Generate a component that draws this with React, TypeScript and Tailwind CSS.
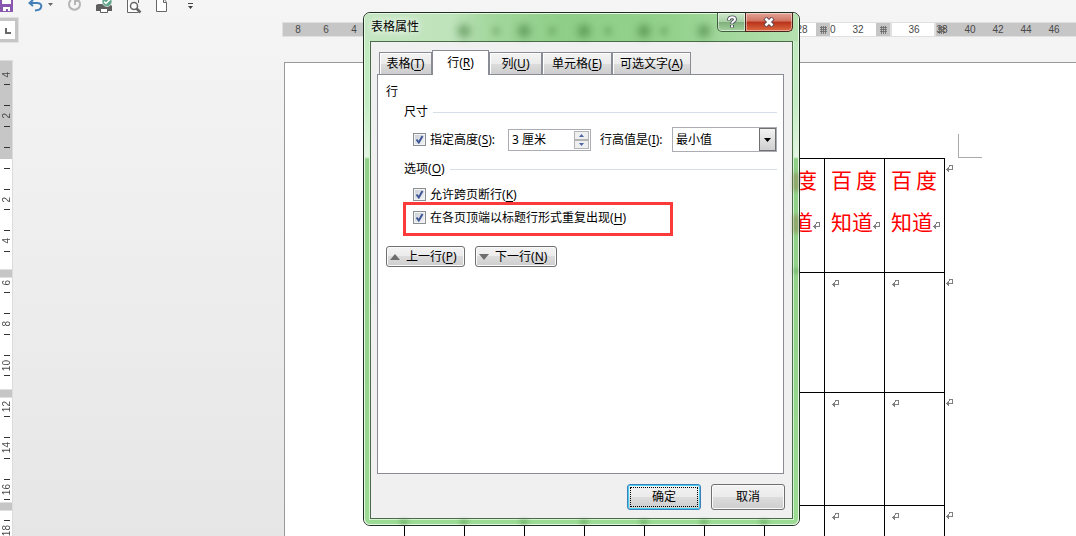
import React, { useState } from 'react'
import clsx from 'clsx'

// centimetre cells, two characters each; blank ones sit under the dialog
const H_LABELS = ['8', '6', '4', ...Array(15).fill(''), '28', '30', '32', '', '36', '38', '40', '42', '44', '46']

const V_CELLS = [
  { label: '2', tall: true },
  { label: '', tall: true },
  { label: '2', tall: false },
  { label: '4', tall: true },
  { label: '6', tall: false },
  { label: '8', tall: true },
  { label: '10', tall: false },
  { label: '12', tall: false },
  { label: '14', tall: true },
  { label: '16', tall: false },
  { label: '18', tall: true },
]

const COLUMNS = [0, 1, 2, 3, 4, 5, 6, 7, 8]
const FIRST_TEXT_COLUMN = 6
const ROW_HEIGHTS = ['h-[120px]', 'h-[113px]', 'h-[120px]']

const TABS = [
  { id: 'table', text: '表格', hotkey: 'T', width: 'w-[53px]' },
  { id: 'row', text: '行', hotkey: 'R', width: 'w-[57px]' },
  { id: 'column', text: '列', hotkey: 'U', width: 'w-[53px]' },
  { id: 'cell', text: '单元格', hotkey: 'E', width: 'w-[70px]' },
  { id: 'alt', text: '可选文字', hotkey: 'A', width: 'w-[79px]' },
]

const Hot = ({ text, hotkey, colon }: { text: string; hotkey: string; colon?: boolean }) => (
  <span className="whitespace-nowrap">
    {text}(<span className="underline underline-offset-2">{hotkey}</span>){colon && ':'}
  </span>
)

const ReturnMark = ({ className }: { className?: string }) => (
  <svg width="8" height="8" viewBox="0 0 8 8" fill="none" stroke="#808080" shapeRendering="crispEdges" className={clsx('shrink-0', className)}>
    <path d="M3 .5h4M6.500 1v4M3.500 0v2M0 4.500h7M1.500 3v3M2.500 2v5" />
  </svg>
)

const Toolbar = () => (
  <div className="flex h-[18px] items-start">
    <button type="button" aria-label="保存" className="w-7">
      <svg width="14" height="13" viewBox="0 0 14 13">
        <path d="M0 0h13v12H0z" fill="#8957ad" />
        <path d="M2 0h9v4H2zM3 7h7v4H8V9H6v2H3z" fill="#fff" />
      </svg>
    </button>
    <button type="button" aria-label="撤消" className="w-[19px]">
      <svg width="15" height="13" viewBox="0 0 15 13" fill="none" stroke="#4480b8" strokeWidth="2">
        <path d="M1 3h8c6 0 6 7-2 7.500M5 0L1.500 3 5 6" />
      </svg>
    </button>
    <button type="button" aria-label="撤消列表" className="w-5">
      <svg width="8" height="8" viewBox="0 0 8 8">
        <path d="M1 3h5L3.500 6z" fill="#666" />
      </svg>
    </button>
    <button type="button" aria-label="重复" className="w-7">
      <svg width="15" height="13" viewBox="0 0 15 13" fill="none" stroke="#b5b5b5" strokeWidth="2">
        <path d="M4 0a5.500 5.500 0 1 0 7 0M8 5V1h3" />
      </svg>
    </button>
    <button type="button" aria-label="快速打印" className="w-8">
      <svg width="18" height="14" viewBox="0 0 18 14">
        <path d="M1 5l2-1h12l2 2v5H1z" fill="#5f5f5f" />
        <path d="M4 0v4h5V0z" fill="#fff" />
        <path d="M5.500 8.500h7v4h-7z" fill="#fff" stroke="#5f5f5f" />
        <circle cx="12" cy="1.500" r="5" fill="#5fa58c" stroke="#f4f4f4" strokeWidth=".7" />
        <path d="M9 1.500l2 2 4-4" fill="none" stroke="#fff" strokeWidth="1.500" />
      </svg>
    </button>
    <button type="button" aria-label="打印预览" className="w-7">
      <svg width="16" height="14" viewBox="0 0 16 14" fill="none" stroke="#666">
        <path d="M.5 0v12.500h11M11.500 0v3" fill="#fff" />
        <circle cx="7" cy="6" r="3.500" fill="#fff" strokeWidth="1.500" />
        <path d="M9.500 8.500l4 4" strokeWidth="2.500" />
      </svg>
    </button>
    <button type="button" aria-label="新建" className="w-8 pl-px">
      <svg width="12" height="13" viewBox="0 0 12 13" fill="#fff" stroke="#666">
        <path d="M.5-1v12.500h10V2.500L8-1" />
        <path d="M7.500 0v2.500h3" />
      </svg>
    </button>
    <button type="button" aria-label="自定义快速访问工具栏">
      <svg width="7" height="10" viewBox="0 0 7 10">
        <path d="M1 3h5v1H1zM1 6h5L3.500 9z" fill="#444" />
      </svg>
    </button>
  </div>
)

const GridHandle = ({ className }: { className: string }) => (
  <span className={clsx('absolute inset-y-0 flex bg-[#c6c6c6]', className)}>
    <svg width="14" height="13" viewBox="0 0 14 13">
      <path d="M5.500 3v8M7.500 3v8M9.500 3v8M4 4.500h7M4 6.500h7M4 8.500h7" stroke="#666" strokeWidth=".8" />
    </svg>
  </span>
)

const HorizontalRuler = () => (
  <div className="relative ml-[264px] mt-1 h-[15px] flex-1 overflow-hidden border-y border-l border-[#e0e0e0] bg-[#c6c6c6]">
    <div className="absolute inset-y-0 left-[128px] w-[525px] border-r-2 border-[#e0e0e0] bg-white" />
    <div className="relative flex pl-px text-[10px] leading-[13px] text-[#4a4a4a]">
      {H_LABELS.map((label, i) => (
        <span key={i} className="w-7 shrink-0 text-center">{label}</span>
      ))}
    </div>
    <GridHandle className="left-[533px]" />
    <GridHandle className="left-[593px] border-r-2 border-[#e0e0e0]" />
    <svg width="8" height="8" viewBox="0 0 8 8" className="absolute left-[655px] top-[3px]">
      <path d="M1.500 0v8M3.500 0v8M5.500 0v8M0 1.500h7M0 3.500h7M0 5.500h7" stroke="#666" strokeWidth=".8" />
    </svg>
  </div>
)

const Tick = () => <span className="ml-1 h-px w-1.5 shrink-0 bg-[#333]" />

const VLabel = ({ children }: { children: React.ReactNode }) => (
  <span className="flex flex-1 items-center justify-center">
    <span className="rotate-180 leading-[11px] [writing-mode:vertical-rl]">{children}</span>
  </span>
)

const VerticalRuler = () => (
  <div className="relative w-[13px] shrink-0 overflow-hidden border-r border-t border-[#dcdcdc] bg-white font-['Liberation_Sans',sans-serif] text-[10px] text-[#4a4a4a]">
    <div className="absolute inset-x-0 top-0 h-[98px] bg-[#c6c6c6]" />
    <div className="relative flex flex-col">
      <div className="flex h-[34px] flex-col pb-[10px] pt-1">
        <VLabel>4</VLabel>
        <Tick />
      </div>
      {V_CELLS.map((cell, i) => (
        <div key={i} className={clsx('flex shrink-0 flex-col py-[10px]', cell.tall ? 'h-[42px]' : 'h-[41px]')}>
          <Tick />
          <VLabel>{cell.label}</VLabel>
          <Tick />
        </div>
      ))}
    </div>
    {/* row boundary handles */}
    <div className="absolute inset-x-0 top-[208px] h-[9px] border-y border-[#e0e0e0] bg-[#c6c6c6]" />
    <div className="absolute inset-x-0 top-[328px] h-[9px] border-y border-[#e0e0e0] bg-[#c6c6c6]" />
    <div className="absolute inset-x-0 top-[441px] h-[9px] border-y border-[#e0e0e0] bg-[#c6c6c6]" />
  </div>
)

const DocumentPage = () => (
  <div className="ml-[271px] mt-[2px] flex-1 overflow-hidden border-l border-t border-[#999] bg-white pt-[71px]">
    <div className="ml-[673px] h-6 w-6 border-b border-l border-[#aaa]" />
    <table className="ml-[119px] w-[554px] table-fixed border-collapse">
      <colgroup>
        {COLUMNS.map(c => <col key={c} className="w-[60px]" />)}
        <col className="w-[14px]" />
      </colgroup>
      <tbody className="align-top">
        <tr className="h-[114px]">
          {COLUMNS.map(c => (
            <td key={c} className="border border-black p-0 pl-[6px] text-[21px] leading-[42px] text-[#f00]">
              {c >= FIRST_TEXT_COLUMN && (
                <>
                  <div className="flex w-[46px] justify-between"><span>百</span><span>度</span></div>
                  <div className="flex items-center whitespace-nowrap">知道<ReturnMark className="mt-2" /></div>
                </>
              )}
            </td>
          ))}
          <td className="p-0 pl-px pt-[6px]"><ReturnMark /></td>
        </tr>
        {ROW_HEIGHTS.map((height, r) => (
          <tr key={r} className={height}>
            {COLUMNS.map(c => (
              <td key={c} className="border border-black p-0 pl-[7px] pt-[7px]"><ReturnMark /></td>
            ))}
            <td className="p-0 pl-px pt-[6px]"><ReturnMark /></td>
          </tr>
        ))}
      </tbody>
    </table>
  </div>
)

const Check = ({ checked, onChange, children }: { checked: boolean; onChange: () => void; children: React.ReactNode }) => (
  <label className="flex items-center gap-1">
    <span className="relative flex">
      <input
        type="checkbox"
        checked={checked}
        onChange={onChange}
        className="h-[13px] w-[13px] appearance-none border border-[#8a8f94] bg-gradient-to-br from-[#c9ced6] to-[#f4f4f4] shadow-[inset_0_0_0_1px_#f4f4f4]"
      />
      {checked && (
        <svg width="13" height="13" viewBox="0 0 13 13" fill="none" className="pointer-events-none absolute inset-0">
          <path d="M3.500 6.500l2.300 3L9.500 3" stroke="#3f5797" strokeWidth="2" />
        </svg>
      )}
    </span>
    {children}
  </label>
)

const Legend = ({ children }: { children: React.ReactNode }) => (
  <div className="flex h-5 items-center gap-[5px] pl-[18px]">
    {children}
    <span className="h-px flex-1 bg-[#d5dfe9]" />
  </div>
)

const buttonFace = 'rounded-[3px] border border-[#707070] bg-[linear-gradient(#f3f3f3_0%,#ebebeb_50%,#dcdcdc_50%,#cecece_100%)] shadow-[inset_0_0_0_1px_#fafafa]'

const RowPanel = () => {
  const [options, setOptions] = useState({ height: true, split: true, header: true })
  const [height, setHeight] = useState('3 厘米')
  const toggle = (key: 'height' | 'split' | 'header') => setOptions(prev => ({ ...prev, [key]: !prev[key] }))

  return (
    <div className="mr-px h-[400px] border border-[#898c95] bg-white pl-2 pr-[6px] pt-[7px]">
      <div className="h-5 leading-5">行</div>
      <Legend>尺寸</Legend>
      <div className="mt-[5px] flex h-[25px] items-center pl-[27px]">
        <Check checked={options.height} onChange={() => toggle('height')}>
          <Hot text="指定高度" hotkey="S" colon />
        </Check>
        <div className="ml-auto flex h-[22px] w-[83px] border border-[#abadb3] p-px">
          <input
            aria-label="指定高度"
            value={height}
            onChange={e => setHeight(e.target.value)}
            className="w-0 flex-1 pl-[2px] outline-none"
          />
          <div className="flex w-[15px] flex-col">
            <button type="button" aria-label="增大" className="flex flex-1 items-center justify-center border border-[#b4b4b4] bg-[#efefef]">
              <svg width="5" height="3" viewBox="0 0 5 3"><path d="M0 3h5L2.500 0z" fill="#4c64a5" /></svg>
            </button>
            <button type="button" aria-label="减小" className="flex flex-1 items-center justify-center border border-[#b4b4b4] bg-[#efefef]">
              <svg width="5" height="3" viewBox="0 0 5 3"><path d="M0 0h5L2.500 3z" fill="#4c64a5" /></svg>
            </button>
          </div>
        </div>
        <label htmlFor="rule" className="ml-[9px] w-[72px]">
          <Hot text="行高值是" hotkey="I" colon />
        </label>
        <div className="relative h-[25px] w-[105px]">
          <select id="rule" className="h-full w-full appearance-none border border-[#abadb3] bg-white pl-[3px]">
            <option>最小值</option>
            <option>固定值</option>
          </select>
          <span className="pointer-events-none absolute inset-y-px right-px flex w-[17px] items-center justify-center border border-[#707070] bg-gradient-to-b from-[#f3f3f3] to-[#cfcfcf]">
            <svg width="7" height="4" viewBox="0 0 7 4"><path d="M0 0h7L3.500 4z" /></svg>
          </span>
        </div>
      </div>
      <div className="mt-[7px]">
        <Legend><Hot text="选项" hotkey="O" /></Legend>
      </div>
      <div className="relative mt-1 pl-[27px]">
        <div className="flex h-[23px] items-center">
          <Check checked={options.split} onChange={() => toggle('split')}>
            <Hot text="允许跨页断行" hotkey="K" />
          </Check>
        </div>
        <div className="flex h-[23px] items-center">
          <Check checked={options.header} onChange={() => toggle('header')}>
            <Hot text="在各页顶端以标题行形式重复出现" hotkey="H" />
          </Check>
        </div>
        <div className="pointer-events-none absolute left-[17px] top-[19px] h-[34px] w-[270px] border-[3px] border-[#fb3a3a]" />
      </div>
      <div className="mt-[17px] flex gap-[10px]">
        <button type="button" className={clsx(buttonFace, 'flex h-[21px] w-[79px] items-center gap-[6px] pl-[3px]')}>
          <svg width="10" height="6" viewBox="0 0 10 6"><path d="M0 6h10L5 0z" fill="#6d6d6d" /></svg>
          <Hot text="上一行" hotkey="P" />
        </button>
        <button type="button" className={clsx(buttonFace, 'flex h-[21px] w-[82px] items-center gap-[6px] pl-[3px]')}>
          <svg width="10" height="6" viewBox="0 0 10 6"><path d="M0 0h10L5 6z" fill="#6d6d6d" /></svg>
          <Hot text="下一行" hotkey="N" />
        </button>
      </div>
    </div>
  )
}

const TitleBar = () => (
  <div className="relative flex h-[27px] items-start justify-between bg-[linear-gradient(90deg,#c4e6c1_0%,#bfe3bb_20%,#a5d89f_28%,#8fce88_45%,#93d18c_70%,#b5e0b0_100%)] pr-[5px]">
    {/* document content showing through the glass */}
    <div className="absolute inset-x-0 top-[11px] flex justify-end gap-12 pr-[88px]">
      {[0, 1, 2, 3, 4].map(i => <span key={i} className="h-3 w-3 rounded-full bg-[#2f6b2c]/60 blur-[4px]" />)}
    </div>
    <div className="absolute inset-x-0 top-[13px] flex justify-end gap-[50px] pr-[131px]">
      {[0, 1, 2, 3].map(i => <span key={i} className="h-2 w-1.5 rounded-full bg-[#2f6b2c]/40 blur-[3px]" />)}
    </div>
    <h1 className="relative pl-[6px] pt-[2px] text-[12px] leading-[22px] text-black [text-shadow:0_0_6px_#fff,0_0_10px_#fff]">表格属性</h1>
    <div className="relative -mt-px flex h-[19px]">
      <button type="button" aria-label="帮助" className="flex w-[29px] items-center justify-center rounded-bl-[5px] border border-t-0 border-[#3f5f3d] bg-[linear-gradient(#cfe9cc_0%,#a9cfa5_50%,#7fae7b_50%,#a4d29f_100%)] shadow-[inset_0_0_0_1px_#ffffff80]">
        <svg width="12" height="14" viewBox="0 0 12 14" fill="none">
          <path d="M3 5.500V4.300C3.600 1.600 9 1.600 9 4.500 9 6.500 6 6.500 6 8.700M6 10v2.500" stroke="#474b5c" strokeWidth="3.800" />
          <path d="M3 5V4.300C3.600 1.600 9 1.600 9 4.500 9 6.500 6 6.500 6 8.400M6 10.200v2" stroke="#fff" strokeWidth="2" />
        </svg>
      </button>
      <button type="button" aria-label="关闭" className="-ml-px flex w-[48px] items-center justify-center rounded-br-[5px] border border-t-0 border-[#4b211b] bg-[linear-gradient(#e2a496_0%,#d27361_45%,#b8321a_50%,#dd6a42_100%)] shadow-[inset_0_0_0_1px_#ffffff70]">
        <svg width="12" height="10" viewBox="0 0 12 10" fill="none">
          <path d="M2 1l8 8M10 1l-8 8" stroke="#5b4550" strokeWidth="4.500" />
          <path d="M2.500 1.500l7 7M9.500 1.500l-7 7" stroke="#fff" strokeWidth="2.600" />
        </svg>
      </button>
    </div>
  </div>
)

const PropertiesDialog = () => {
  const [active, setActive] = useState('row')

  return (
    <section
      role="dialog"
      aria-label="表格属性"
      className="absolute left-[363px] top-3 w-[437px] overflow-hidden rounded-[7px] border border-[#1f2f1f] text-[12px] text-black"
    >
      <div className="rounded-[6px] border border-[#e6f7e4] bg-[linear-gradient(#bfe8bb_0,#c4edc4_90px,#e2f4e1_143px,#90d088_145px,#94d48c_360px,#9bdb93_100%)] px-[5px] pb-[5px]">
        <div className="-mx-[5px]"><TitleBar /></div>
        <div className="border border-[#4a6b48] bg-[#f0f0f0] pb-2 pl-[6px] pr-[7px] pt-2 shadow-[0_0_0_1px_#d5f2d2]">
          <div role="tablist" className="flex h-6 items-end pl-[2px]">
            {TABS.map(tab => (
              <button
                key={tab.id}
                type="button"
                role="tab"
                aria-selected={active === tab.id}
                onClick={() => setActive(tab.id)}
                className={clsx(
                  'border border-b-0 border-[#898c95]',
                  tab.width,
                  active === tab.id
                    ? 'relative -mb-px h-[25px] bg-white pb-[1px]'
                    : 'h-[22px] bg-[linear-gradient(#f3f3f3_0%,#ebebeb_50%,#dddddd_50%,#cdcdcd_100%)] shadow-[inset_0_1px_0_#fff,inset_1px_0_0_#fff]'
                )}
              >
                <Hot text={tab.text} hotkey={tab.hotkey} />
              </button>
            ))}
          </div>
          <RowPanel />
          <div className="mt-[10px] flex justify-end gap-[10px]">
            <button type="button" className="h-[26px] w-[74px] rounded-[3px] border border-[#3c7fb1] bg-[linear-gradient(#f3f3f3_0%,#ebebeb_50%,#dcdcdc_50%,#cecece_100%)] p-[2px] shadow-[inset_0_0_0_1px_#46d0f5]">
              <span className="flex h-full items-center justify-center border border-dotted border-black">确定</span>
            </button>
            <button type="button" className={clsx(buttonFace, 'h-[26px] w-[74px]')}>取消</button>
          </div>
        </div>
      </div>
      {/* blurred page text and grid lines behind the frame */}
      <div className="pointer-events-none absolute right-px top-[160px] flex w-1 flex-col gap-[24px]">
        <span className="h-[18px] bg-[#8f7f50]/80 blur-[2px]" />
        <span className="h-[18px] bg-[#8f7f50]/80 blur-[2px]" />
        <span className="mt-3 h-1 bg-[#4f8f4a]/70 blur-[2px]" />
      </div>
      <div className="pointer-events-none absolute bottom-px left-[36px] flex h-1 gap-[52px]">
        {[0, 1, 2, 3, 4, 5, 6].map(i => <span key={i} className="w-2 bg-[#4f8f4a]/60 blur-[2px]" />)}
      </div>
    </section>
  )
}

export default function App() {
  return (
    <div className="relative flex h-screen flex-col overflow-hidden bg-gradient-to-b from-[#f5f5f5] to-[#e6e6e6] font-['Noto_Sans','Noto_Sans_CJK_SC',sans-serif]">
      <Toolbar />
      <div className="flex h-[42px] items-start font-['Liberation_Sans',sans-serif]">
        <button
          type="button"
          aria-label="制表符"
          className="flex h-6 w-[18px] items-center justify-center border-y-[3px] border-r-[3px] border-[#c6c6c6] bg-white outline outline-[#e0e0e0]"
        >
          <svg width="6" height="6" viewBox="0 0 6 6" className="mt-[2px]"><path d="M0 0h2v4h4v2H0z" fill="#6a6a6a" /></svg>
        </button>
        <HorizontalRuler />
      </div>
      <main className="flex min-h-0 flex-1">
        <VerticalRuler />
        <DocumentPage />
      </main>
      <PropertiesDialog />
    </div>
  )
}
